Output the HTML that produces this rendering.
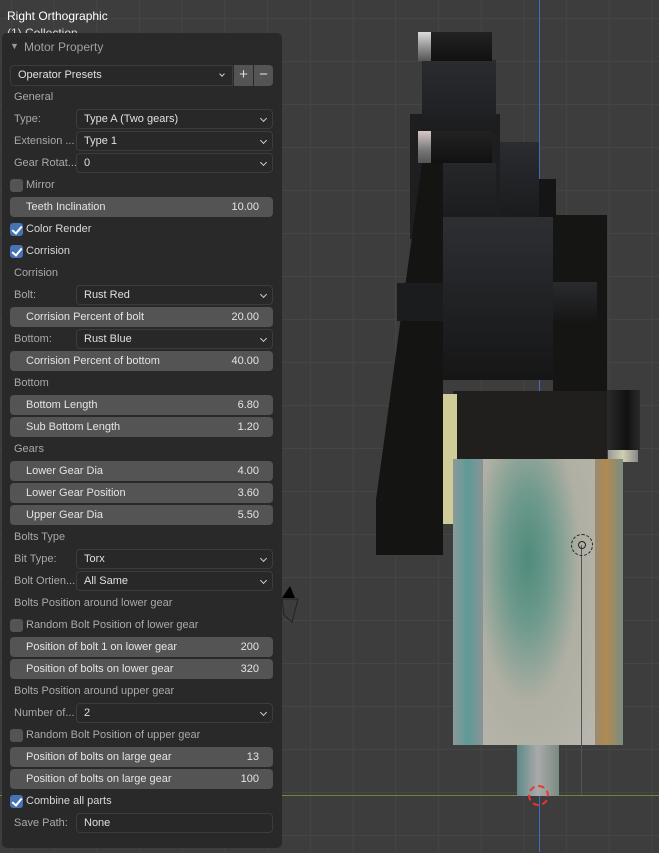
<!DOCTYPE html>
<html><head><meta charset="utf-8"><style>
*{margin:0;padding:0;box-sizing:border-box}
body{width:659px;height:852px;overflow:hidden;position:relative;font-family:"Liberation Sans","DejaVu Sans",sans-serif;font-size:11px;
background-color:#3d3d3d;
background-image:linear-gradient(90deg,#454545 1px,transparent 1px),linear-gradient(#454545 1px,transparent 1px);
background-size:42.7px 43px;background-position:11px 18px;}
.a{position:absolute}
.panel{position:absolute;left:2px;top:33px;width:280px;height:815px;background:rgba(40,40,40,0.97);border-radius:5px}
.lbl{position:absolute;left:14px;color:#a9a9a9;line-height:20px;white-space:nowrap}
.sec{position:absolute;left:14px;color:#a9a9a9;line-height:20px}
.dd{position:absolute;left:76px;width:197px;height:20px;background:#282828;border:1px solid #3c3c3c;border-radius:4px;color:#e0e0e0;line-height:18px;padding-left:7px}
.dd:after{content:"";position:absolute;right:6px;top:6px;width:4px;height:4px;border-right:1.3px solid #ccc;border-bottom:1.3px solid #ccc;transform:rotate(45deg)}
.dd.na:after{display:none}
.sl{position:absolute;left:10px;width:263px;height:20px;background:#545454;border-radius:4px;color:#e4e4e4;line-height:20px;padding-left:16px}
.sl span{position:absolute;right:14px}
.cb{position:absolute;left:10px;width:13px;height:13px;border-radius:3px;background:#545454}
.cb.on{background:#4772b3}
.cb.on:after{content:"";position:absolute;left:4px;top:1px;width:4px;height:8px;border-right:2px solid #fff;border-bottom:2px solid #fff;transform:rotate(40deg)}
.ct{position:absolute;left:26px;color:#d8d8d8;line-height:20px}
.w{position:absolute;left:0;top:1px;width:659px;height:852px}
</style></head><body>
<div class="a" style="left:539px;top:0;width:1px;height:852px;background:#3d6fb8"></div>
<div class="a" style="left:0;top:795px;width:659px;height:1px;background:#6a8a36"></div>
<div class="a" style="left:410px;top:114px;width:90px;height:125px;background:#1d1e20"></div>
<div class="a" style="left:422px;top:60px;width:74px;height:73px;background:linear-gradient(#2a2c30,#1b1c1e)"></div>
<div class="a" style="left:418px;top:32px;width:13px;height:29px;background:linear-gradient(#ddd,#888 60%,#555)"></div>
<div class="a" style="left:431px;top:32px;width:61px;height:29px;background:linear-gradient(#222,#111)"></div>
<div class="a" style="left:500px;top:142px;width:39px;height:75px;background:linear-gradient(#2a2c30,#1a1b1d)"></div>
<div class="a" style="left:539px;top:179px;width:17px;height:38px;background:#151515"></div>
<div class="a" style="left:418px;top:131px;width:13px;height:32px;background:linear-gradient(#d8c8c8,#777 60%,#555)"></div>
<div class="a" style="left:431px;top:131px;width:61px;height:32px;background:linear-gradient(#222,#111)"></div>
<div class="a" style="left:422px;top:163px;width:74px;height:70px;background:linear-gradient(#25272a,#18191a)"></div>
<div class="a" style="left:553px;top:215px;width:54px;height:176px;background:#151514"></div>
<div class="a" style="left:443px;top:217px;width:110px;height:163px;background:linear-gradient(#2d2f33,#1c1d1f 70%,#161616)"></div>
<div class="a" style="left:553px;top:282px;width:44px;height:40px;background:linear-gradient(#2a2b2e,#161616)"></div>
<svg class="a" style="left:0;top:0" width="659" height="852"><polygon points="422,163 443,163 443,555 376,555 376,500" fill="#141413"/></svg>
<div class="a" style="left:397px;top:283px;width:46px;height:38px;background:#1b1c1d"></div>
<div class="a" style="left:453px;top:391px;width:154px;height:68px;background:#201f1d"></div>
<div class="a" style="left:607px;top:390px;width:33px;height:60px;background:linear-gradient(90deg,#2a2a2a,#111 60%,#2a2a2a)"></div>
<div class="a" style="left:608px;top:450px;width:30px;height:12px;background:linear-gradient(90deg,#999,#d0cfb0,#888)"></div>
<div class="a" style="left:443px;top:394px;width:14px;height:130px;background:#cfcc98"></div>
<div class="a" style="left:453px;top:459px;width:30px;height:286px;background:linear-gradient(90deg,#8a9a9a,#5e9a98 50%,#8a9496)"></div>
<div class="a" style="left:483px;top:459px;width:112px;height:286px;background:radial-gradient(ellipse at 40% 35%,#4f8a7c 0,#6e9a8c 25%,#b0afa4 55%,#b9b7ad 100%)"></div>
<div class="a" style="left:595px;top:459px;width:28px;height:286px;background:linear-gradient(90deg,#9a8a70,#b08a50 40%,#7a8c84)"></div>
<div class="a" style="left:517px;top:745px;width:42px;height:51px;background:linear-gradient(90deg,#5f8a88,#aaa 50%,#7a8a80)"></div>
<div class="a" style="left:581px;top:545px;width:1px;height:250px;background:#555"></div>
<div class="a" style="left:571px;top:534px;width:22px;height:22px;border:1.5px dashed #222;border-radius:50%"></div>
<div class="a" style="left:578px;top:541px;width:8px;height:8px;border:1.5px solid #222;border-radius:50%"></div>
<div class="a" style="left:528px;top:785px;width:21px;height:21px;border:2px dashed #e33;border-radius:50%;background:transparent"></div>
<svg class="a" style="left:270px;top:570px" width="50" height="60"><polygon points="12,28 20,16 25,28" fill="#000"/><polygon points="12,29 28,29 22,52 14,45" fill="none" stroke="#222" stroke-width="1"/></svg>
<div class="a" style="left:7px;top:9px;color:#fff;font-size:12px">Right Orthographic</div>
<div class="a" style="left:7px;top:26px;color:#ddd;font-size:12px">(1) Collection</div>
<div class="panel"></div>
<div class="w">
<div class="a" style="left:10px;top:40px;color:#9a9a9a;font-size:9px">▼</div>
<div class="a" style="left:24px;top:39px;color:#a0a0a0;font-size:12px">Motor Property</div>
<div class="a" style="left:10px;top:64px;width:223px;height:21px;background:#282828;border:1px solid #3c3c3c;border-radius:4px 0 0 4px;color:#e0e0e0;line-height:19px;padding-left:7px">Operator Presets</div>
<div class="a" style="left:220px;top:71px;width:4px;height:4px;border-right:1.3px solid #ccc;border-bottom:1.3px solid #ccc;transform:rotate(45deg)"></div>
<div class="a" style="left:234px;top:64px;width:19px;height:21px;background:#545454;color:#ddd;text-align:center;line-height:20px;font-size:15px">+</div>
<div class="a" style="left:254px;top:64px;width:19px;height:21px;background:#545454;border-radius:0 4px 4px 0;color:#ddd;text-align:center;line-height:20px;font-size:15px">−</div>
<div class="sec" style="top:86px">General</div>
<div class="lbl" style="top:108px">Type:</div><div class="dd" style="top:108px">Type A (Two gears)</div>
<div class="lbl" style="top:130px">Extension ...</div><div class="dd" style="top:130px">Type 1</div>
<div class="lbl" style="top:152px">Gear Rotat...</div><div class="dd" style="top:152px">0</div>
<div class="cb" style="top:178px"></div><div class="ct" style="top:174px;color:#aaa">Mirror</div>
<div class="sl" style="top:196px">Teeth Inclination<span>10.00</span></div>
<div class="cb on" style="top:222px"></div><div class="ct" style="top:218px">Color Render</div>
<div class="cb on" style="top:244px"></div><div class="ct" style="top:240px">Corrision</div>
<div class="sec" style="top:262px">Corrision</div>
<div class="lbl" style="top:284px">Bolt:</div><div class="dd" style="top:284px">Rust Red</div>
<div class="sl" style="top:306px">Corrision Percent of bolt<span>20.00</span></div>
<div class="lbl" style="top:328px">Bottom:</div><div class="dd" style="top:328px">Rust Blue</div>
<div class="sl" style="top:350px">Corrision Percent of bottom<span>40.00</span></div>
<div class="sec" style="top:372px">Bottom</div>
<div class="sl" style="top:394px">Bottom Length<span>6.80</span></div>
<div class="sl" style="top:416px">Sub Bottom Length<span>1.20</span></div>
<div class="sec" style="top:438px">Gears</div>
<div class="sl" style="top:460px">Lower Gear Dia<span>4.00</span></div>
<div class="sl" style="top:482px">Lower Gear Position<span>3.60</span></div>
<div class="sl" style="top:504px">Upper Gear Dia<span>5.50</span></div>
<div class="sec" style="top:526px">Bolts Type</div>
<div class="lbl" style="top:548px">Bit Type:</div><div class="dd" style="top:548px">Torx</div>
<div class="lbl" style="top:570px">Bolt Ortien...</div><div class="dd" style="top:570px">All Same</div>
<div class="sec" style="top:592px">Bolts Position around lower gear</div>
<div class="cb" style="top:618px"></div><div class="ct" style="top:614px;color:#aaa">Random Bolt Position of lower gear</div>
<div class="sl" style="top:636px">Position of bolt 1 on lower gear<span>200</span></div>
<div class="sl" style="top:658px">Position of bolts on lower gear<span>320</span></div>
<div class="sec" style="top:680px">Bolts Position around upper gear</div>
<div class="lbl" style="top:702px">Number of...</div><div class="dd" style="top:702px">2</div>
<div class="cb" style="top:728px"></div><div class="ct" style="top:724px;color:#aaa">Random Bolt Position of upper gear</div>
<div class="sl" style="top:746px">Position of bolts on large gear<span>13</span></div>
<div class="sl" style="top:768px">Position of bolts on large gear<span>100</span></div>
<div class="cb on" style="top:794px"></div><div class="ct" style="top:790px">Combine all parts</div>
<div class="lbl" style="top:812px">Save Path:</div><div class="dd na" style="top:812px">None</div>
</div>
</body></html>
